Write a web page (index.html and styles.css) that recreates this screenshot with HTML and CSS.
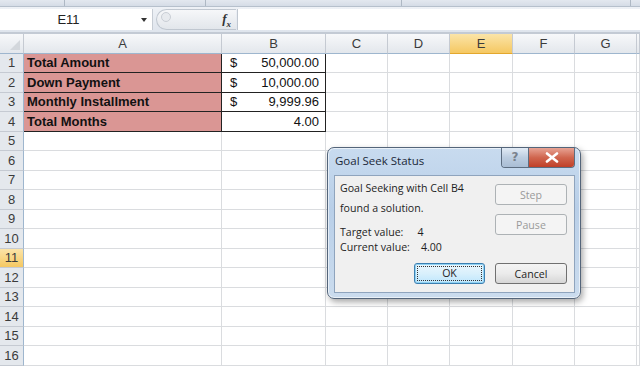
FILE: index.html
```html
<!DOCTYPE html>
<html lang="en">
<head>
    <meta charset="UTF-8">
    <title>Goal Seek Status</title>
    <link rel="stylesheet" href="styles.css">
</head>
<body>

<div class="ribbon">
    <span class="group g1"></span>
    <span class="group g2"></span>
    <span class="group g3"></span>
    <span class="group g4"></span>
</div>

<div class="formula-bar">
    <div class="name-box">
        <span class="cell-ref">E11</span>
        <span class="arrow"></span>
    </div>
    <div class="fx-box">
        <span class="knob"></span>
        <span class="fx"><i>f</i><sub>x</sub></span>
    </div>
    <div class="formula-input"></div>
</div>

<div class="sheet">
    <table class="grid">
        <colgroup>
            <col style="width:24px">
            <col style="width:198px">
            <col style="width:104px">
            <col style="width:62px">
            <col style="width:62px">
            <col style="width:63px">
            <col style="width:62px">
            <col style="width:62px">
            <col style="width:3px">
        </colgroup>
        <tr class="head">
            <th class="corner"><span></span></th>
            <th>A</th><th>B</th><th>C</th><th>D</th><th class="sel">E</th><th>F</th><th>G</th><th></th>
        </tr>
        <tr>
            <th class="num">1</th>
            <td class="label">Total Amount</td>
            <td class="money"><span>$</span><span>50,000.00</span></td>
            <td></td><td></td><td></td><td></td><td></td><td></td>
        </tr>
        <tr>
            <th class="num">2</th>
            <td class="label">Down Payment</td>
            <td class="money"><span>$</span><span>10,000.00</span></td>
            <td></td><td></td><td></td><td></td><td></td><td></td>
        </tr>
        <tr>
            <th class="num">3</th>
            <td class="label">Monthly Installment</td>
            <td class="money"><span>$</span><span>9,999.96</span></td>
            <td></td><td></td><td></td><td></td><td></td><td></td>
        </tr>
        <tr>
            <th class="num">4</th>
            <td class="label">Total Months</td>
            <td class="money"><span></span><span>4.00</span></td>
            <td></td><td></td><td></td><td></td><td></td><td></td>
        </tr>
        <tr><th class="num">5</th><td></td><td></td><td></td><td></td><td></td><td></td><td></td><td></td></tr>
        <tr><th class="num">6</th><td></td><td></td><td></td><td></td><td></td><td></td><td></td><td></td></tr>
        <tr><th class="num">7</th><td></td><td></td><td></td><td></td><td></td><td></td><td></td><td></td></tr>
        <tr><th class="num">8</th><td></td><td></td><td></td><td></td><td></td><td></td><td></td><td></td></tr>
        <tr><th class="num">9</th><td></td><td></td><td></td><td></td><td></td><td></td><td></td><td></td></tr>
        <tr><th class="num">10</th><td></td><td></td><td></td><td></td><td></td><td></td><td></td><td></td></tr>
        <tr><th class="num sel">11</th><td></td><td></td><td></td><td></td><td></td><td></td><td></td><td></td></tr>
        <tr><th class="num">12</th><td></td><td></td><td></td><td></td><td></td><td></td><td></td><td></td></tr>
        <tr><th class="num">13</th><td></td><td></td><td></td><td></td><td></td><td></td><td></td><td></td></tr>
        <tr><th class="num">14</th><td></td><td></td><td></td><td></td><td></td><td></td><td></td><td></td></tr>
        <tr><th class="num">15</th><td></td><td></td><td></td><td></td><td></td><td></td><td></td><td></td></tr>
        <tr><th class="num">16</th><td></td><td></td><td></td><td></td><td></td><td></td><td></td><td></td></tr>
    </table>

    <!-- Окно Goal Seek поверх листа -->
    <div class="dialog">
        <div class="dialog-title">
            <span class="title-text">Goal Seek Status</span>
            <div class="title-buttons">
                <span class="help-btn">?</span>
                <span class="close-btn">
                    <svg width="14" height="11" viewBox="0 0 14 11">
                        <path d="M2 1.5 L12 9.5 M12 1.5 L2 9.5" stroke="#fff" stroke-width="2.6" stroke-linecap="round"/>
                    </svg>
                </span>
            </div>
        </div>
        <div class="dialog-body">
            <div class="dialog-main">
                <div class="dialog-text">
                    <p class="msg">Goal Seeking with Cell B4<br>found a solution.</p>
                    <p class="values">
                        <span>Target value:</span><span class="v1">4</span><br>
                        <span>Current value:</span><span class="v2">4.00</span>
                    </p>
                </div>
                <div class="side-buttons">
                    <button class="btn disabled">Step</button>
                    <button class="btn disabled">Pause</button>
                </div>
            </div>
            <div class="dialog-footer">
                <button class="btn default"><span>OK</span></button>
                <button class="btn">Cancel</button>
            </div>
        </div>
    </div>
</div>

</body>
</html>
```

FILE: styles.css
```css
/* Общие стили */
html, body {
    margin: 0;
    padding: 0;
    width: 640px;
    height: 367px;
    overflow: hidden;
    background-color: #ffffff;
    font-family: 'Liberation Sans', Arial, sans-serif;
}

/* Полоска ленты сверху */
.ribbon {
    height: 6px;
    display: flex;
    background: linear-gradient(#e3e8ef, #d5dce6);
    border-bottom: 1px solid #b6c0cc;
}

.ribbon .group {
    border-right: 1px solid #aeb8c4;
}

.g1 { width: 64px; }
.g2 { width: 140px; }
.g3 { width: 195px; }
.g4 { width: 228px; }

/* Строка формул */
.formula-bar {
    display: flex;
    height: 26px;
    padding-top: 2px;
    background: linear-gradient(#eef1f6, #dfe5ed);
    border-bottom: 1px solid #c3cad4;
    box-sizing: border-box;
}

.name-box {
    width: 152px;
    height: 21px;
    background-color: #ffffff;
    border-right: 1px solid #c6ccd4;
    display: flex;
    align-items: center;
    position: relative;
}

.cell-ref {
    width: 137px;
    text-align: center;
    font-size: 13px;
    color: #222222;
}

.arrow {
    position: absolute;
    right: 5px;
    top: 9px;
    border-left: 3px solid transparent;
    border-right: 3px solid transparent;
    border-top: 4px solid #333333;
}

.fx-box {
    width: 80px;
    height: 21px;
    margin-left: 3px;
    border: 1px solid #c0c7d0;
    border-right: none;
    border-radius: 11px 0 0 11px;
    background: linear-gradient(#f6f7f9, #e2e6eb);
    box-sizing: border-box;
    display: flex;
    align-items: center;
    justify-content: space-between;
    padding: 0 5px 0 4px;
}

.knob {
    width: 8px;
    height: 8px;
    border-radius: 50%;
    background: #e7eaee;
    border: 1px solid #c9ced5;
    margin-top: -5px;
}

.fx {
    font-family: 'Liberation Serif', serif;
    font-weight: bold;
    font-size: 13px;
    color: #333333;
}

.fx sub {
    font-size: 9px;
    font-style: italic;
}

.formula-input {
    flex: 1;
    height: 21px;
    margin-left: 1px;
    background-color: #ffffff;
    border-left: 1px solid #c0c7d0;
}

/* Лист */
.sheet {
    position: relative;
    border-top: 1px solid #c3cad4;
}

.grid {
    border-collapse: separate;
    border-spacing: 0;
    table-layout: fixed;
    width: 640px;
}

.grid th, .grid td {
    height: 19.5px;
    padding: 0;
    box-sizing: border-box;
    border-right: 1px solid #dadcdf;
    border-bottom: 1px solid #dadcdf;
    font-size: 13px;
    white-space: nowrap;
    overflow: hidden;
}

.grid .head th {
    height: 19.5px;
    font-weight: normal;
    color: #3b3b3b;
    background: linear-gradient(#f7f8fa, #e3e7ec);
    border-right: 1px solid #c5cad2;
    border-bottom: 1px solid #9eb6ce;
    text-align: center;
}

.grid .head th.sel {
    background: linear-gradient(#fbe4a8, #f5c862);
    border-bottom-color: #e3a72d;
}

.corner {
    position: relative;
}

.corner span {
    position: absolute;
    right: 3px;
    bottom: 3px;
    border-left: 10px solid transparent;
    border-bottom: 10px solid #d3d7dc;
}

.grid th.num {
    font-weight: normal;
    color: #3b3b3b;
    background: #e4e8ed;
    border-right: 1px solid #9eb6ce;
    border-bottom: 1px solid #c5cad2;
    text-align: center;
}

.grid th.num.sel {
    background: linear-gradient(#fbe4a8, #f5c862);
}

.grid td.label {
    background-color: #da9694;
    font-weight: bold;
    color: #111111;
    padding-left: 3px;
    border-bottom: 1px solid #222222;
    border-right: 1px solid #222222;
}

.grid td.money {
    border-bottom: 1px solid #222222;
    border-right: 1px solid #222222;
    padding: 0 6px 0 8px;
    color: #111111;
}

.money span:first-child {
    float: left;
}

.money span:last-child {
    float: right;
}

/* Диалог */
.dialog {
    position: absolute;
    top: 113px;
    left: 327px;
    width: 254px;
    height: 152px;
    box-sizing: border-box;
    border: 1px solid #54657a;
    border-radius: 7px;
    background: linear-gradient(#c8dbef, #b9cfe8 40%, #cbdcee);
    box-shadow: 2px 3px 6px rgba(0, 0, 0, 0.35), inset 0 0 0 1px rgba(255, 255, 255, 0.6);
    font-family: 'Open Sans', 'Noto Sans', sans-serif;
    font-size: 10.6px;
    color: #1e1e1e;
}

.dialog-title {
    height: 27px;
    display: flex;
    justify-content: space-between;
}

.title-text {
    padding: 5px 0 0 7px;
    font-size: 11.5px;
    color: #1b2838;
}

.title-buttons {
    display: flex;
    height: 19px;
    margin-right: 5px;
    border: 1px solid #5c6d80;
    border-top: none;
    border-radius: 0 0 4px 4px;
    overflow: hidden;
}

.help-btn {
    width: 26px;
    background: linear-gradient(#e2ebf5, #bccde0 50%, #a9bdd4);
    border-right: 1px solid #5c6d80;
    text-align: center;
    font-family: 'DejaVu Sans', sans-serif;
    font-weight: bold;
    font-size: 12px;
    color: #7a828c;
    line-height: 18px;
}

.close-btn {
    width: 45px;
    background: linear-gradient(#e8a394, #d0664f 50%, #c03f27);
    display: flex;
    align-items: center;
    justify-content: center;
}

.dialog-body {
    margin: 0 5px 0 6px;
    height: 118px;
    box-sizing: border-box;
    background-color: #f0f0f0;
    border: 1px solid #8fa4bd;
    padding: 2px 7px 0 5px;
    display: flex;
    flex-direction: column;
}

.dialog-main {
    display: flex;
    justify-content: space-between;
}

.dialog-text p {
    margin: 0;
    line-height: 20px;
}

.dialog-text .values {
    margin-top: 7px;
    line-height: 15px;
}

.v1 {
    margin-left: 14px;
}

.v2 {
    margin-left: 11px;
}

.side-buttons {
    display: flex;
    flex-direction: column;
    gap: 9px;
    padding-top: 6px;
}

.btn {
    width: 72px;
    height: 21px;
    padding: 0;
    border: 1px solid #707070;
    border-radius: 3px;
    background: linear-gradient(#f4f4f4, #ebebeb 50%, #d6d6d6);
    font-family: 'Open Sans', 'Noto Sans', sans-serif;
    font-size: 10.6px;
    color: #1e1e1e;
}

.btn.disabled {
    border-color: #adb2b5;
    background: #f4f4f4;
    color: #9a9a9a;
}

.dialog-footer {
    display: flex;
    justify-content: flex-end;
    gap: 10px;
    margin-top: auto;
    margin-bottom: 8px;
}

.btn.default {
    width: 71px;
    border-color: #3c7fb1;
    box-shadow: inset 0 0 0 1px #8fd1f2;
    background: linear-gradient(#eaf6fd, #d9f0fc 50%, #bee6fd);
    padding: 2px;
}

.btn.default span {
    display: block;
    height: 100%;
    border: 1px dotted #333333;
    box-sizing: border-box;
    line-height: 13px;
}
```
